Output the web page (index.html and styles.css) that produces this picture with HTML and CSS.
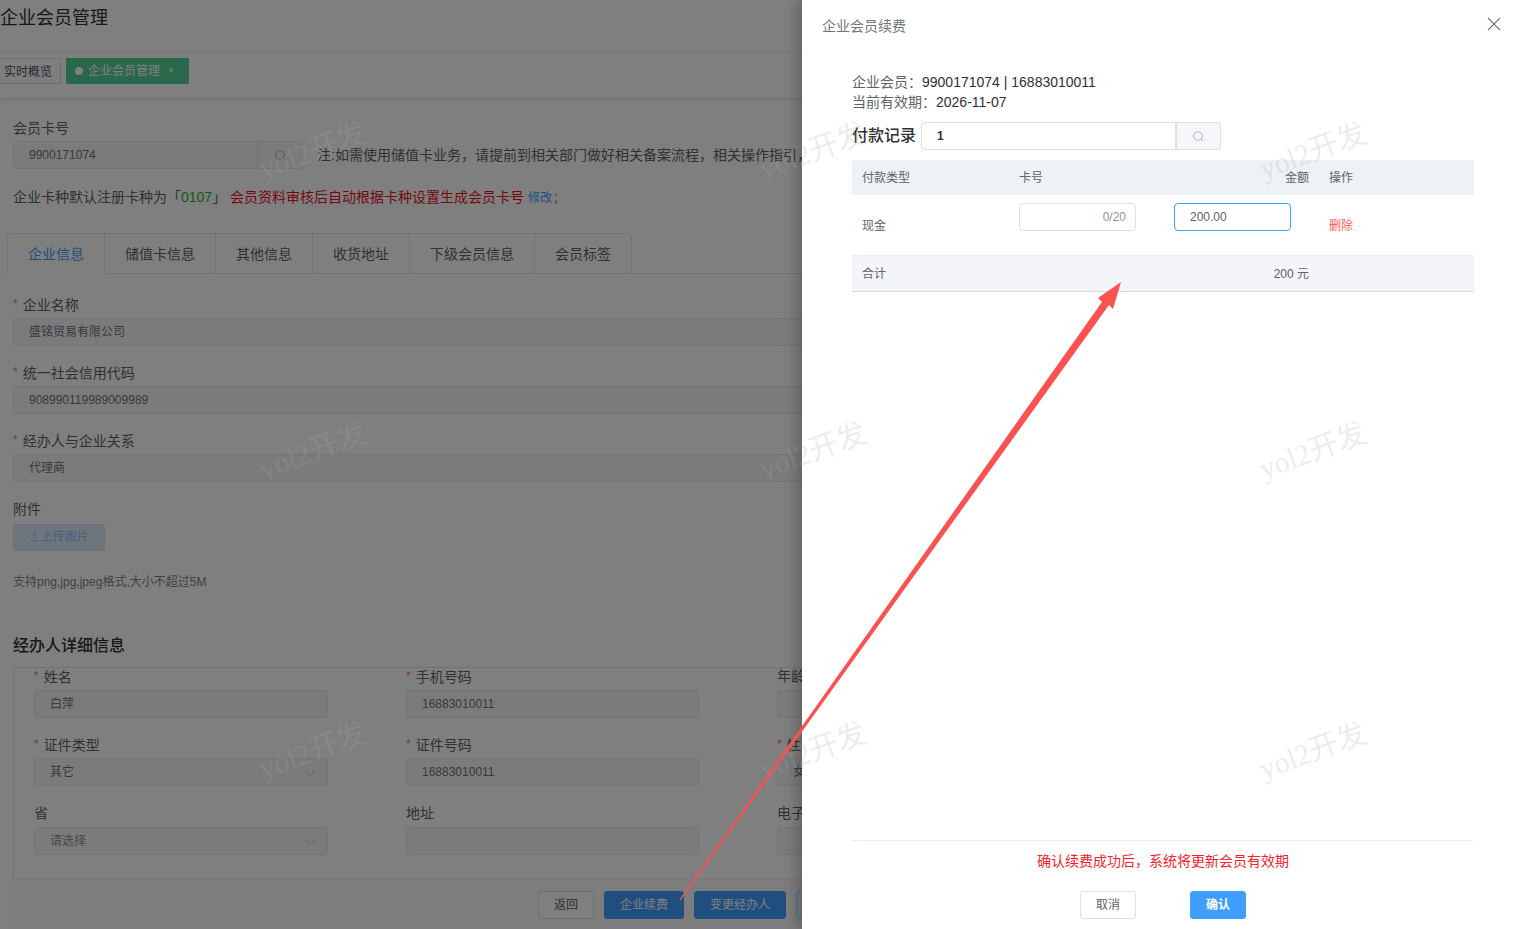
FILE: index.html
```html
<!DOCTYPE html>
<html lang="zh-CN">
<head>
  <meta charset="UTF-8" />
  <title>企业会员管理</title>
  <link rel="stylesheet" href="styles.css">
</head>
<body>
  <div class="page">
    <div class="main">
      <div class="title-bar">企业会员管理</div>
      <div class="tag-bar">
        <span class="tag">实时概览</span>
        <span class="tag tag-active"><i class="tag-dot"></i>企业会员管理<em class="tag-close">×</em></span>
      </div>

      <div class="content">
        <div class="field-label tight">会员卡号</div>
        <div class="card-row">
          <div class="input-group card-input">
            <div class="input is-disabled grow">9900171074</div>
            <div class="input-append">
              <svg class="icon-search" viewBox="0 0 14 14"><circle cx="6.5" cy="6.5" r="4.6"/><path d="M10 10l2 2"/></svg>
            </div>
          </div>
          <div class="note">注:如需使用储值卡业务，请提前到相关部门做好相关备案流程，相关操作指引，</div>
        </div>

        <div class="card-tip">企业卡种默认注册卡种为「<b class="green">0107</b>」 <span class="red">会员资料审核后自动根据卡种设置生成会员卡号</span> <a class="link">修改</a>;</div>

        <div class="tabs">
          <span class="tab tab-active">企业信息</span>
          <span class="tab">储值卡信息</span>
          <span class="tab">其他信息</span>
          <span class="tab">收货地址</span>
          <span class="tab">下级会员信息</span>
          <span class="tab">会员标签</span>
        </div>

        <div class="field-label"><i class="req">*</i>企业名称</div>
        <div class="input is-disabled">盛铭贸易有限公司</div>
        <div class="field-label mt"><i class="req">*</i>统一社会信用代码</div>
        <div class="input is-disabled">908990119989009989</div>
        <div class="field-label mt"><i class="req">*</i>经办人与企业关系</div>
        <div class="input is-disabled">代理商</div>

        <div class="field-label mt attach-label">附件</div>
        <div class="upload-btn">
          <svg class="icon-upload" viewBox="0 0 12 12"><path d="M6 8V2M3.5 4.5L6 2l2.5 2.5M2 10.5h8"/></svg>上传图片
        </div>
        <div class="upload-hint">支持png,jpg,jpeg格式,大小不超过5M</div>

        <h3 class="section-title">经办人详细信息</h3>
        <div class="detail-box">
          <div class="detail-grid">
            <div>
              <div class="field-label"><i class="req">*</i>姓名</div>
              <div class="input is-disabled">白萍</div>
            </div>
            <div>
              <div class="field-label"><i class="req">*</i>手机号码</div>
              <div class="input is-disabled">16883010011</div>
            </div>
            <div>
              <div class="field-label">年龄</div>
              <div class="input is-disabled"></div>
            </div>
            <div>
              <div class="field-label"><i class="req">*</i>证件类型</div>
              <div class="input is-disabled select">其它
                <svg class="icon-chevron" viewBox="0 0 12 8"><path d="M1 1.5l5 5 5-5"/></svg>
              </div>
            </div>
            <div>
              <div class="field-label"><i class="req">*</i>证件号码</div>
              <div class="input is-disabled">16883010011</div>
            </div>
            <div>
              <div class="field-label"><i class="req">*</i>性别</div>
              <div class="input is-disabled">女</div>
            </div>
            <div>
              <div class="field-label">省</div>
              <div class="input is-disabled select placeholder">请选择
                <svg class="icon-chevron" viewBox="0 0 12 8"><path d="M1 1.5l5 5 5-5"/></svg>
              </div>
            </div>
            <div>
              <div class="field-label">地址</div>
              <div class="input is-disabled"></div>
            </div>
            <div>
              <div class="field-label">电子邮箱</div>
              <div class="input is-disabled"></div>
            </div>
          </div>
        </div>

        <div class="action-bar">
          <span class="btn">返回</span>
          <span class="btn btn-primary w80">企业续费</span>
          <span class="btn btn-primary w92">变更经办人</span>
          <span class="btn btn-outline">打印</span>
        </div>
      </div>
    </div>

    <div class="mask"></div>

    <div class="drawer">
      <div class="drawer-head">
        <span>企业会员续费</span>
        <svg class="icon-close" viewBox="0 0 14 14"><path d="M1 1l12 12M13 1L1 13"/></svg>
      </div>
      <div class="drawer-body">
        <div class="info">
          <div><span class="info-key">企业会员：</span>9900171074 | 16883010011</div>
          <div><span class="info-key">当前有效期：</span>2026-11-07</div>
        </div>
        <div class="pay-row">
          <span class="pay-title">付款记录</span>
          <div class="input-group pay-input">
            <div class="input grow strong">1</div>
            <div class="input-append light">
              <svg class="icon-search" viewBox="0 0 14 14"><circle cx="6.5" cy="6.5" r="4.6"/><path d="M10 10l2 2"/></svg>
            </div>
          </div>
        </div>
        <div class="table">
          <div class="tr tr-head">
            <span>付款类型</span><span>卡号</span><span class="amount">金额</span><span>操作</span>
          </div>
          <div class="tr tr-body">
            <span class="cell-low">现金</span>
            <div class="table-input count">0/20</div>
            <div class="table-input focus">200.00</div>
            <span class="cell-low danger">删除</span>
          </div>
          <div class="tr tr-total">
            <span>合计</span><span></span><span class="amount">200 元</span><span></span>
          </div>
        </div>
      </div>
      <div class="drawer-foot">
        <div class="foot-tip">确认续费成功后，系统将更新会员有效期</div>
        <div class="foot-btns">
          <span class="btn">取消</span>
          <span class="btn btn-primary bold">确认</span>
        </div>
      </div>
    </div>

    <div class="watermarks">
      <span>yol2开发</span><span>yol2开发</span><span>yol2开发</span>
      <span>yol2开发</span><span>yol2开发</span><span>yol2开发</span>
      <span>yol2开发</span><span>yol2开发</span><span>yol2开发</span>
    </div>

    <svg class="arrow" viewBox="0 0 1514 929">
      <polygon points="1121,282 1113,309 1109,305 680.5,900.5 679.5,899.5 1102,302 1098,298"/>
    </svg>
  </div>
</body>
</html>
```

FILE: styles.css
```css
* {
  box-sizing: border-box;
}
html, body {
  margin: 0;
  height: 100%;
  overflow: hidden;
}
body {
  font-family: "Liberation Sans", "Noto Sans CJK SC", sans-serif;
  font-size: 14px;
  color: #606266;
  background: #fff;
}
i, em {
  font-style: normal;
}
.page {
  position: relative;
  width: 1514px;
  height: 929px;
  overflow: hidden;
}

/* page under the mask */
.title-bar {
  height: 52px;
  padding-top: 5px;
  font-size: 18px;
  line-height: 26px;
  color: #303133;
}
.tag-bar {
  height: 46px;
  padding-top: 5px;
  display: flex;
  gap: 5px;
  background: #fff;
  border-top: 1px solid #f0f0f0;
  box-shadow: 0 2px 3px rgba(0, 0, 0, .12);
  margin-left: -1px;
}
.tag {
  height: 26px;
  line-height: 26px;
  padding: 0 8px 0 4px;
  font-size: 12px;
  color: #495060;
  border: 1px solid #d8dce5;
}
.tag-active {
  width: 123px;
  padding: 0 0 0 8px;
  color: #fff;
  background: #54d098;
  border-color: #54d098;
  display: flex;
  align-items: center;
}
.tag-dot {
  width: 8px;
  height: 8px;
  border-radius: 50%;
  background: #fff;
  margin-right: 5px;
}
.tag-close {
  margin-left: 8px;
  font-size: 10px;
}
.content {
  padding: 20px 0 0 13px;
}
.field-label {
  height: 20px;
  line-height: 20px;
  margin-bottom: 4px;
  color: #606266;
}
.field-label.tight {
  margin-bottom: 3px;
}
.field-label.mt {
  margin-top: 16px;
}
.field-label.attach-label {
  margin-top: 17px;
  margin-bottom: 5px;
}
.req {
  color: #f56c6c;
  margin-right: 5px;
  font-size: 12px;
  vertical-align: 2px;
}
.input {
  height: 28px;
  line-height: 26px;
  padding: 0 15px;
  font-size: 12px;
  color: #606266;
  background: #fff;
  border: 1px solid #dcdfe6;
  border-radius: 4px;
}
.input.is-disabled {
  background: #f5f7fa;
  border-color: #e4e7ed;
  color: #707377;
}
.input.placeholder {
  color: #8d9095;
}
.select {
  position: relative;
}
.icon-chevron {
  position: absolute;
  right: 11px;
  top: 10px;
  width: 12px;
  height: 8px;
  fill: none;
  stroke: #c0c4cc;
}
.input-group {
  display: flex;
}
.grow {
  flex: 1;
  border-radius: 4px 0 0 4px;
}
.input-append {
  width: 45px;
  height: 28px;
  border: 1px solid #e4e7ed;
  border-left: 0;
  border-radius: 0 4px 4px 0;
  background: #f5f7fa;
  display: flex;
  align-items: center;
  justify-content: center;
}
.input-append.light {
  border-color: #dcdfe6;
  border-left: 1px solid #dcdfe6;
}
.icon-search {
  width: 13px;
  height: 13px;
  fill: none;
  stroke: #a8abb2;
}
.card-row {
  display: flex;
  align-items: center;
  gap: 14px;
}
.card-input {
  width: 290px;
  flex: none;
}
.note {
  white-space: nowrap;
  color: #606266;
  margin-top: -2px;
}
.card-tip {
  margin-top: 18px;
  height: 20px;
  line-height: 20px;
}
.green {
  color: #1fb52f;
  font-weight: 400;
}
.red {
  color: #e81123;
}
.link {
  color: #409eff;
  font-size: 12px;
  margin-right: 2px;
}
.tabs {
  display: flex;
  margin: 26px 0 20px -6px;
  height: 41px;
  border-bottom: 1px solid #dfe4ed;
}
.tab {
  height: 41px;
  line-height: 41px;
  padding: 0 20px;
  border: 1px solid #dfe4ed;
  border-left: 0;
  border-bottom: 0;
  color: #606266;
  white-space: nowrap;
}
.tab-active {
  color: #409eff;
  border-left: 1px solid #dfe4ed;
  border-radius: 4px 0 0 0;
  background: #fff;
  height: 42px;
}
.tab:last-child {
  border-radius: 0 4px 0 0;
}
.upload-btn {
  width: 92px;
  height: 27px;
  line-height: 25px;
  text-align: center;
  font-size: 12px;
  color: #8cc5ff;
  background: #dfeaf8;
  border: 1px solid #d0e2f5;
  border-radius: 3px;
}
.icon-upload {
  width: 11px;
  height: 11px;
  fill: none;
  stroke: #8cc5ff;
  vertical-align: -1px;
}
.upload-hint {
  margin-top: 21px;
  height: 20px;
  line-height: 20px;
  font-size: 12px;
  color: #808388;
}
.section-title {
  margin: 42px 0 0;
  height: 24px;
  line-height: 24px;
  font-size: 16px;
  font-weight: 500;
  color: #303133;
}
.detail-box {
  margin-top: 9px;
  height: 212px;
  padding-left: 20px;
  border: 1px solid #e4e7ed;
  border-bottom: 0;
  border-radius: 4px 0 0 0;
}
.detail-grid {
  display: grid;
  grid-template-columns: 294px 293px 293px;
  grid-template-rows: 68px 69px 52px;
  column-gap: 78px;
  margin-top: -2px;
}
.action-bar {
  margin-left: -6px;
  height: 50px;
  padding: 11px 0 0 531px;
  display: flex;
  gap: 10px;
  background: #fafafa;
  border-top: 1px solid #f0f0f0;
}
.btn {
  width: 56px;
  height: 28px;
  line-height: 26px;
  text-align: center;
  font-size: 12px;
  color: #606266;
  background: #fff;
  border: 1px solid #dcdfe6;
  border-radius: 3px;
  flex: none;
}
.btn-primary {
  color: #fff;
  background: #409eff;
  border-color: #409eff;
}
.btn-outline {
  color: #409eff;
  background: #ecf5ff;
  border-color: #b3d8ff;
}
.w80 {
  width: 80px;
}
.w92 {
  width: 92px;
}
.bold {
  font-weight: 700;
}

.mask {
  position: absolute;
  inset: 0;
  background: rgba(0, 0, 0, .5);
}

/* drawer */
.drawer {
  position: absolute;
  top: 0;
  right: 0;
  bottom: 0;
  width: 712px;
  display: flex;
  flex-direction: column;
  background: #fff;
  box-shadow: -6px 0 12px rgba(0, 0, 0, .2);
}
.drawer-head {
  height: 72px;
  padding: 16px 13px 0 20px;
  display: flex;
  justify-content: space-between;
  line-height: 20px;
  color: #72767b;
}
.icon-close {
  width: 14px;
  height: 14px;
  margin-top: 1px;
  fill: none;
  stroke: #72767b;
  stroke-width: 1.1;
}
.drawer-body {
  flex: 1;
  padding: 0 40px 0 50px;
}
.info {
  line-height: 20px;
  color: #303133;
}
.info-key {
  color: #606266;
}
.pay-row {
  margin-top: 10px;
  display: flex;
  align-items: center;
  gap: 5px;
}
.pay-title {
  font-size: 16px;
  font-weight: 500;
  line-height: 24px;
  color: #303133;
}
.pay-input {
  width: 300px;
}
.strong {
  color: #303133;
  font-weight: 700;
}
.table {
  margin-top: 10px;
  font-size: 12px;
  color: #606266;
}
.tr {
  display: grid;
  grid-template-columns: 157px 155px 135px 1fr;
  padding-left: 10px;
}
.tr-head {
  height: 35px;
  line-height: 37px;
  background: #eef1f6;
}
.tr-body {
  height: 60px;
  padding-top: 8px;
  align-items: start;
}
.cell-low {
  margin-top: 15px;
  line-height: 17px;
}
.tr-total {
  height: 37px;
  line-height: 36px;
  background: #f3f5f9;
  border-top: 1px solid #ebeef5;
  border-bottom: 1px solid #d5d8de;
}
.amount {
  text-align: right;
}
.tr-head span:last-child,
.tr-total span:last-child {
  padding-left: 20px;
}
.tr-body .danger {
  padding-left: 20px;
  color: #fb5a5a;
}
.table-input {
  width: 117px;
  height: 28px;
  line-height: 26px;
  font-size: 12px;
  border: 1px solid #dcdfe6;
  border-radius: 4px;
  padding: 0 9px 0 15px;
}
.table-input.count {
  text-align: right;
  color: #909399;
}
.table-input.focus {
  color: #606266;
  border-color: #409eff;
}
.drawer-foot {
  margin: 0 40px 0 50px;
  height: 89px;
  border-top: 1px solid #ebeef5;
  text-align: center;
}
.foot-tip {
  margin-top: 10px;
  line-height: 20px;
  color: #f5222d;
}
.foot-btns {
  margin-top: 20px;
  display: flex;
  justify-content: center;
  gap: 54px;
}

/* watermark and annotation lie over everything */
.watermarks {
  position: absolute;
  top: -2px;
  left: 62px;
  display: grid;
  grid-template-columns: repeat(3, 500px);
  grid-auto-rows: 300px;
  place-items: center;
  pointer-events: none;
}
.watermarks span {
  font-family: "Liberation Serif", "Noto Sans CJK SC", serif;
  font-size: 29.5px;
  color: rgba(170, 170, 170, .22);
  white-space: nowrap;
  transform: rotate(-20deg);
}
.arrow {
  position: absolute;
  inset: 0;
  width: 1514px;
  height: 929px;
  pointer-events: none;
}
.arrow polygon {
  fill: #fc5151;
}
```
